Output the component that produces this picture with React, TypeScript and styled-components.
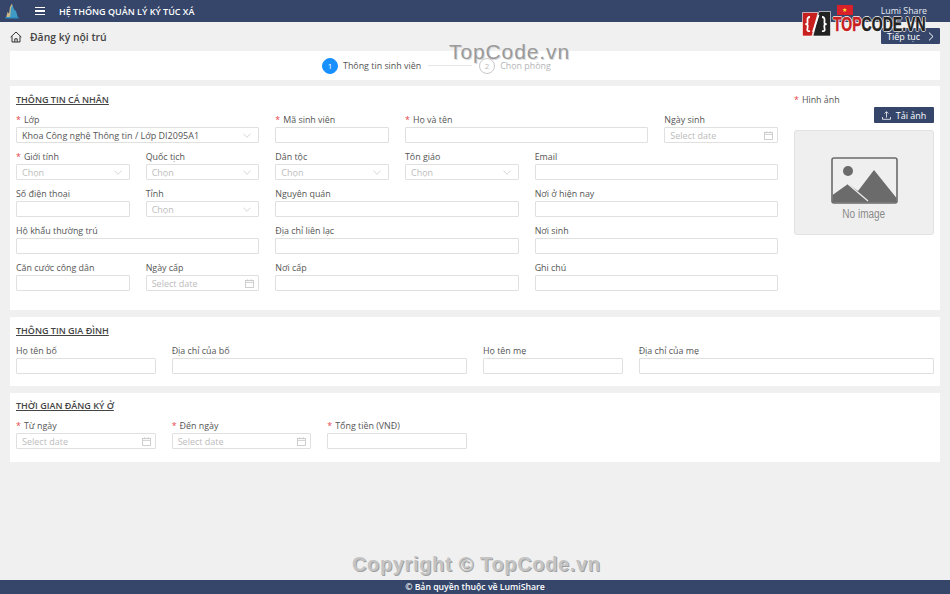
import React from 'react';
import styled, { createGlobalStyle } from 'styled-components';

const GlobalStyle = createGlobalStyle`
  html, body {
    margin: 0;
    padding: 0;
    background: #f0f0f0;
  }
  * {
    box-sizing: border-box;
  }
`

const CalendarIcon = () => (
  <svg width="9" height="9" viewBox="0 0 9 9" fill="none" stroke="#c4c4c4" strokeWidth="0.8">
    <rect x="0.5" y="1.4" width="8" height="7.1" />
    <path d="M0.5 3.4H8.5M2.7 0.3V2.1M6.3 0.3V2.1" />
  </svg>
)

const ChevronIcon = () => (
  <Chevron width="8" height="5" viewBox="0 0 8 5" fill="none" stroke="#c4c4c4" strokeWidth="0.7">
    <path d="M0.4 0.6L4 4.3L7.6 0.6" />
  </Chevron>
)

const Field: React.FC<{
  label: string
  required?: boolean
  span?: number
  kind?: 'text' | 'select' | 'date'
  value?: string
}> = ({ label, required, span = 1, kind = 'text', value }) => (
  <FieldWrap $span={span}>
    <Label>
      {required && <Star>*</Star>}
      {label}
    </Label>
    <Control>
      {kind === 'select' && <ControlText $filled={!!value}>{value || 'Chọn'}</ControlText>}
      {kind === 'select' && <ChevronIcon />}
      {kind === 'date' && <ControlText>Select date</ControlText>}
      {kind === 'date' && <CalendarIcon />}
    </Control>
  </FieldWrap>
)

export default function App() {
  return (
    <Page>
      <GlobalStyle />
      <Header>
        <HeaderLeft>
          <svg width="14" height="16" viewBox="0 0 14 16">
            <path d="M1 15L2.500 9L4 10.500L5 4L7 0.500L8 5L9 7V15Z" fill="#c9b98a" />
            <path d="M5 15L6 5L7.500 2L9 6.500L11 8L13 15Z" fill="#3f9bc4" />
            <path d="M0.500 15.500H13.500V14H0.500Z" fill="#2f8fc0" />
          </svg>
          <Burger>
            <span />
            <span />
            <span />
          </Burger>
          <AppTitle>HỆ THỐNG QUẢN LÝ KÝ TÚC XÁ</AppTitle>
        </HeaderLeft>
        <HeaderRight>
          <Flag>★</Flag>
          <UserName>Lumi Share</UserName>
        </HeaderRight>
      </Header>

      <Main>
        <PageBar>
          <Crumb>
            <svg width="12" height="12" viewBox="0 0 12 12" fill="none" stroke="#333" strokeWidth="1">
              <path d="M0.6 6.2L6 1L11.4 6.2M2 5.2V11H10V5.2M4.8 11V7.8H7.2V11" />
            </svg>
            <CrumbText>Đăng ký nội trú</CrumbText>
          </Crumb>
          <NextButton>
            Tiếp tục
            <svg width="6" height="9" viewBox="0 0 6 9" fill="none" stroke="#fff" strokeWidth="1">
              <path d="M1 0.6L5 4.5L1 8.4" />
            </svg>
          </NextButton>
        </PageBar>

        <StepsCard>
          <Step>
            <StepDot $active>1</StepDot>
            <StepLabel $active>Thông tin sinh viên</StepLabel>
          </Step>
          <StepLine />
          <Step>
            <StepDot>2</StepDot>
            <StepLabel>Chọn phòng</StepLabel>
          </Step>
        </StepsCard>

        <Card $mt={6} $pt={7} $pb={19}>
          <PersonalLayout>
            <div>
              <SectionTitle>THÔNG TIN CÁ NHÂN</SectionTitle>
              <FormGrid>
                <Field label="Lớp" required span={2} kind="select" value="Khoa Công nghệ Thông tin / Lớp DI2095A1" />
                <Field label="Mã sinh viên" required />
                <Field label="Họ và tên" required span={2} />
                <Field label="Ngày sinh" kind="date" />
                <Field label="Giới tính" required kind="select" />
                <Field label="Quốc tịch" kind="select" />
                <Field label="Dân tộc" kind="select" />
                <Field label="Tôn giáo" kind="select" />
                <Field label="Email" span={2} />
                <Field label="Số điện thoại" />
                <Field label="Tỉnh" kind="select" />
                <Field label="Nguyên quán" span={2} />
                <Field label="Nơi ở hiện nay" span={2} />
                <Field label="Hộ khẩu thường trú" span={2} />
                <Field label="Địa chỉ liên lạc" span={2} />
                <Field label="Nơi sinh" span={2} />
                <Field label="Căn cước công dân" />
                <Field label="Ngày cấp" kind="date" />
                <Field label="Nơi cấp" span={2} />
                <Field label="Ghi chú" span={2} />
              </FormGrid>
            </div>
            <PhotoColumn>
              <Label>
                <Star>*</Star>Hình ảnh
              </Label>
              <UploadButton>
                <svg width="9" height="9" viewBox="0 0 9 9" fill="none" stroke="#fff" strokeWidth="0.8">
                  <path d="M4.500 6.500V0.800M2.600 2.600L4.500 0.700L6.400 2.600M0.500 6V8.300H8.500V6" />
                </svg>
                Tải ảnh
              </UploadButton>
              <PhotoBox>
                <svg width="67" height="47" viewBox="0 0 67 47">
                  <rect x="1" y="1" width="65" height="45" rx="2" fill="#efefef" stroke="#6b6b6b" strokeWidth="1.6" />
                  <circle cx="17" cy="14" r="5" fill="#6b6b6b" />
                  <path d="M1.500 45.500V38L17 27L27 34L43 13L65.500 41V45.500Z" fill="#6b6b6b" />
                  <path d="M17 27L37 44" stroke="#efefef" strokeWidth="1.2" />
                </svg>
                <NoImage>No image</NoImage>
              </PhotoBox>
            </PhotoColumn>
          </PersonalLayout>
        </Card>

        <Card $mt={7} $pt={7} $pb={12}>
          <SectionTitle>THÔNG TIN GIA ĐÌNH</SectionTitle>
          <FormGrid>
            <Field label="Họ tên bố" />
            <Field label="Địa chỉ của bố" span={2} />
            <Field label="Họ tên mẹ" />
            <Field label="Địa chỉ của mẹ" span={2} />
          </FormGrid>
        </Card>

        <Card $mt={7} $pt={6} $pb={13}>
          <SectionTitle>THỜI GIAN ĐĂNG KÝ Ở</SectionTitle>
          <FormGrid>
            <Field label="Từ ngày" required kind="date" />
            <Field label="Đến ngày" required kind="date" />
            <Field label="Tổng tiền (VNĐ)" required />
          </FormGrid>
        </Card>
      </Main>

      <Footer>© Bản quyền thuộc về LumiShare</Footer>

      <CenterMark>TopCode.vn</CenterMark>
      <CopyrightMark>Copyright © TopCode.vn</CopyrightMark>
      <BrandMark>
        <svg width="29" height="26" viewBox="0 0 29 26">
          <path d="M0.500 1.500H16L10 25H0.500Z" fill="#c8201f" stroke="#fff" strokeWidth="0.600" />
          <path d="M17 0.500H28.500V25H11Z" fill="#222" stroke="#fff" strokeWidth="0.600" />
          <path d="M8 6Q5 6 5.500 10T3.500 13Q6.500 13 5.500 17T8 20" fill="none" stroke="#fff" strokeWidth="1.800" />
          <path d="M11 21L16.500 4" stroke="#fff" strokeWidth="1.800" />
          <path d="M20 6Q23 6 22.500 10T24.500 13Q21.500 13 22.500 17T20 20" fill="none" stroke="#fff" strokeWidth="1.800" />
        </svg>
        <BrandText>
          <BrandRed>TOP</BrandRed>CODE.VN
        </BrandText>
      </BrandMark>
    </Page>
  )
}

const Page = styled.div`
  position: relative;
  width: 950px;
  height: 594px;
  overflow: hidden;
  display: flex;
  flex-direction: column;
  background: #f0f0f0;
  color: #444;
  font-family: 'Open Sans', 'Noto Sans', sans-serif;
  font-size: 9px;
`
const Header = styled.header`
  height: 22px;
  flex: none;
  display: flex;
  justify-content: space-between;
  align-items: center;
  padding: 0 23px 0 5px;
  background: #35466a;
`
const HeaderLeft = styled.div`
  display: flex;
  align-items: center;
`
const Burger = styled.div`
  width: 10px;
  margin-left: 16px;
  display: flex;
  flex-direction: column;
  gap: 2px;
  span {
    height: 1.500px;
    background: #fff;
  }
`
const AppTitle = styled.div`
  margin-left: 14px;
  color: #fff;
  font-size: 9px;
  font-weight: 600;
`
const HeaderRight = styled.div`
  display: flex;
  align-items: center;
  gap: 28px;
`
const Flag = styled.div`
  width: 16px;
  height: 10px;
  margin-bottom: 3px;
  display: flex;
  align-items: center;
  justify-content: center;
  background: #d8202a;
  color: #ffdd33;
  font-size: 6px;
`
const UserName = styled.div`
  color: #e8ebf2;
  font-size: 8.800px;
`
const Main = styled.main`
  flex: 1;
  padding: 0 10px;
  display: flex;
  flex-direction: column;
`
const PageBar = styled.div`
  height: 29px;
  flex: none;
  display: flex;
  justify-content: space-between;
  align-items: flex-start;
`
const Crumb = styled.div`
  display: flex;
  align-items: center;
  gap: 8px;
  height: 29px;
`
const CrumbText = styled.div`
  color: #444;
  font-size: 10.400px;
  font-weight: 600;
`
const NextButton = styled.button`
  margin-top: 6px;
  width: 59px;
  height: 16px;
  padding: 0 6px;
  display: flex;
  align-items: center;
  justify-content: space-between;
  border: none;
  border-radius: 1px;
  background: #35466a;
  color: #fff;
  font-family: inherit;
  font-size: 9px;
`
const StepsCard = styled.section`
  height: 29px;
  flex: none;
  padding-left: 312px;
  display: flex;
  align-items: center;
  background: #fff;
`
const Step = styled.div`
  display: flex;
  align-items: center;
  gap: 5px;
`
const StepDot = styled.div<{ $active?: boolean }>`
  width: 16px;
  height: 16px;
  border-radius: 50%;
  display: flex;
  align-items: center;
  justify-content: center;
  border: 1px solid ${p => (p.$active ? '#1890ff' : '#c9c9c9')};
  background: ${p => (p.$active ? '#1890ff' : '#fff')};
  color: ${p => (p.$active ? '#fff' : '#bdbdbd')};
  font-size: 8px;
`
const StepLabel = styled.div<{ $active?: boolean }>`
  color: ${p => (p.$active ? '#555' : '#b5b5b5')};
  font-size: 8.900px;
`
const StepLine = styled.div`
  width: 44px;
  height: 1px;
  margin: 0 7px;
  background: #e6e6e6;
`
const Card = styled.section<{ $mt: number; $pt: number; $pb: number }>`
  flex: none;
  margin-top: ${p => p.$mt}px;
  padding: ${p => p.$pt}px 6px ${p => p.$pb}px;
  background: #fff;
`
const PersonalLayout = styled.div`
  display: grid;
  grid-template-columns: 762px 140px;
  column-gap: 16px;
`
const SectionTitle = styled.h3`
  margin: 0;
  height: 13px;
  line-height: 13px;
  color: #444;
  font-size: 9px;
  font-weight: 600;
  text-decoration: underline;
`
const FormGrid = styled.div`
  margin-top: 8px;
  display: grid;
  grid-template-columns: repeat(6, 1fr);
  column-gap: 16px;
  row-gap: 8px;
`
const FieldWrap = styled.div<{ $span: number }>`
  grid-column: span ${p => p.$span};
  min-width: 0;
`
const Label = styled.div`
  height: 13px;
  line-height: 12px;
  color: #555;
  font-size: 8.900px;
  white-space: nowrap;
`
const Star = styled.span`
  margin-right: 3px;
  color: #e8474c;
`
const Control = styled.div`
  height: 16px;
  padding: 0 4px 0 5px;
  display: flex;
  align-items: center;
  justify-content: space-between;
  background: #fff;
  border: 1px solid #e0e0e0;
  border-radius: 1px;
`
const ControlText = styled.span<{ $filled?: boolean }>`
  color: ${p => (p.$filled ? '#555' : '#bcbcbc')};
  font-size: 9px;
  white-space: nowrap;
`
const Chevron = styled.svg`
  margin-right: 3px;
`
const PhotoColumn = styled.div`
  padding-top: 1px;
  display: flex;
  flex-direction: column;
  align-items: stretch;
`
const UploadButton = styled.button`
  align-self: flex-end;
  width: 60px;
  height: 16px;
  display: flex;
  align-items: center;
  justify-content: center;
  gap: 5px;
  border: none;
  border-radius: 1px;
  background: #35466a;
  color: #fff;
  font-family: inherit;
  font-size: 9px;
`
const PhotoBox = styled.div`
  margin-top: 7px;
  height: 105px;
  display: flex;
  flex-direction: column;
  align-items: center;
  padding-top: 26px;
  background: #efefef;
  border: 1px solid #e2e2e2;
  border-radius: 3px;
`
const NoImage = styled.div`
  margin-top: 3px;
  color: #8a8a8a;
  font-family: 'Liberation Sans', sans-serif;
  font-size: 12.500px;
  transform: scaleX(0.8);
`
const Footer = styled.footer`
  height: 14px;
  flex: none;
  display: flex;
  align-items: center;
  justify-content: center;
  background: #35466a;
  color: #fff;
  font-size: 8.700px;
  font-weight: 600;
`
const CenterMark = styled.div`
  position: absolute;
  left: 449px;
  top: 40px;
  color: #9a9a9a;
  font-family: 'Liberation Sans', sans-serif;
  font-size: 21px;
  letter-spacing: 0.9px;
  text-shadow: 1px 1px 0 #d9d9d9;
`
const CopyrightMark = styled.div`
  position: absolute;
  left: 352px;
  top: 553px;
  color: #c4c4c4;
  font-family: 'Liberation Sans', sans-serif;
  font-size: 20px;
  font-weight: 700;
  letter-spacing: 0.65px;
  text-shadow: 1px 1px 0 #a0a0a0;
`
const BrandMark = styled.div`
  position: absolute;
  left: 802px;
  top: 11px;
  display: flex;
  align-items: center;
  gap: 2px;
`
const BrandText = styled.div`
  color: #222;
  font-family: 'Liberation Sans', sans-serif;
  font-size: 19.500px;
  font-weight: 700;
  white-space: nowrap;
  transform: scaleX(0.72);
  transform-origin: left center;
  -webkit-text-stroke: 0.5px currentColor;
  text-shadow: 1px 0 0 #fff, -1px 0 0 #fff, 0 1px 0 #fff, 0 -1px 0 #fff;
`
const BrandRed = styled.span`
  color: #c8201f;
`
